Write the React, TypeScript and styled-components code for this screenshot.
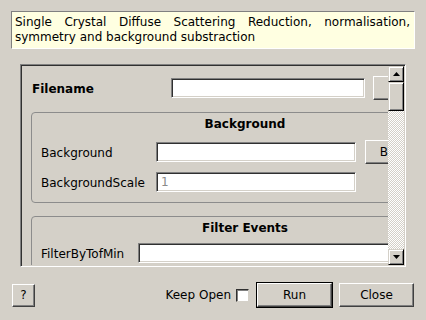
import React from "react";
import styled, { createGlobalStyle } from "styled-components";

const Global = createGlobalStyle`
  html, body { margin: 0; padding: 0; background: #d4d0c8; }
  body { font-family: "DejaVu Sans", "Liberation Sans", sans-serif; font-size: 12px; color: #000; }
`;

const Dialog = styled.div`
  width: 426px;
  height: 320px;
  box-sizing: border-box;
  padding: 11px 11px 0 11px;
  display: flex;
  flex-direction: column;
  background: #d4d0c8;
  overflow: hidden;
`;

const Description = styled.div`
  height: 38px;
  box-sizing: border-box;
  background: #ffffe1;
  border: 1px solid;
  border-color: #808080 #ffffff #ffffff #808080;
  padding: 3px 4px 3px 3px;
  line-height: 15px;
  text-align: justify;
`;

const ScrollFrame = styled.div`
  margin: 15px 9px 0 9px;
  height: 203px;
  box-sizing: border-box;
  border: 1px solid;
  border-color: #808080 #ffffff #ffffff #808080;
  box-shadow: inset 1px 1px 0 #303030, inset -1px -1px 0 #d4d0c8;
  padding: 1px;
  display: flex;
`;

const Viewport = styled.div`
  flex: 1;
  overflow: hidden;
`;

const Content = styled.div`
  width: 446px;
  box-sizing: border-box;
  padding: 10px 0 0 9px;
  display: flex;
  flex-direction: column;
`;

const FileRow = styled.div`
  display: flex;
  align-items: center;
  height: 24px;
  gap: 8px;
`;

const BoldLabel = styled.div<{ $w: number }>`
  width: ${(p) => p.$w}px;
  flex-shrink: 0;
  padding: 1px 0 0 1px;
  box-sizing: border-box;
  font-weight: bold;
`;

const Label = styled.div<{ $w: number }>`
  width: ${(p) => p.$w}px;
  flex-shrink: 0;
  padding-top: 1px;
  white-space: nowrap;
`;

const Field = styled.input<{ $w: number; $muted?: boolean }>`
  width: ${(p) => p.$w}px;
  height: 20px;
  flex-shrink: 0;
  box-sizing: border-box;
  margin: 0;
  padding: 0 4px;
  background: #ffffff;
  border: 1px solid;
  border-color: #808080 #ffffff #ffffff #808080;
  box-shadow: inset 1px 1px 0 #303030, inset -1px -1px 0 #d4d0c8;
  font-family: "DejaVu Sans", sans-serif;
  font-size: 12px;
  color: ${(p) => (p.$muted ? "#8a8a8a" : "#000")};
  outline: none;
`;

const Button = styled.button<{ $w: number; $h?: number }>`
  width: ${(p) => p.$w}px;
  height: ${(p) => p.$h ?? 24}px;
  flex-shrink: 0;
  box-sizing: border-box;
  margin: 0;
  padding: 0;
  background: #d4d0c8;
  border: 1px solid;
  border-color: #ffffff #404040 #404040 #ffffff;
  box-shadow: inset -1px -1px 0 #808080;
  font-family: "DejaVu Sans", sans-serif;
  font-size: 12px;
  color: #000;
  display: flex;
  align-items: center;
  justify-content: center;
`;

const DefaultButtonRing = styled.div`
  border: 1px solid #000;
  display: flex;
  flex-shrink: 0;
`;

const Group = styled.div<{ $mt: number }>`
  width: 428px;
  margin-top: ${(p) => p.$mt}px;
  box-sizing: border-box;
  border: 1px solid #8c8c8c;
  border-radius: 4px;
  padding: 4px 9px 10px 9px;
  display: flex;
  flex-direction: column;
  gap: 10px;
`;

const GroupTitle = styled.div<{ $after: number }>`
  height: 14px;
  line-height: 14px;
  margin-bottom: ${(p) => p.$after - 10}px;
  text-align: center;
  font-weight: bold;
`;

const Row = styled.div`
  display: flex;
  align-items: center;
  height: 20px;
  gap: 9px;
`;

const Scrollbar = styled.div`
  width: 16px;
  flex-shrink: 0;
  display: flex;
  flex-direction: column;
`;

const ArrowBtn = styled.div`
  height: 16px;
  box-sizing: border-box;
  background: #d4d0c8;
  border: 1px solid;
  border-color: #d4d0c8 #000 #000 #d4d0c8;
  box-shadow: inset 1px 1px 0 #fff, inset -1px -1px 0 #808080;
  display: flex;
  align-items: center;
  justify-content: center;
`;

const Thumb = styled.div`
  height: 29px;
  box-sizing: border-box;
  background: #d4d0c8;
  border: 1px solid;
  border-color: #d4d0c8 #000 #000 #d4d0c8;
  box-shadow: inset 1px 1px 0 #fff, inset -1px -1px 0 #808080;
`;

const Track = styled.div`
  flex: 1;
  background: repeating-conic-gradient(#ffffff 0 25%, #d4d0c8 0 50%) 0 0 / 2px 2px;
`;

const BottomBar = styled.div`
  margin: 15px 1px 0 1px;
  height: 26px;
  display: flex;
  align-items: center;
`;

const Spacer = styled.div`
  flex: 1;
`;

const KeepOpen = styled.label`
  display: flex;
  align-items: center;
  gap: 5px;
  margin-right: 7px;
`;

const Check = styled.span`
  width: 13px;
  height: 13px;
  box-sizing: border-box;
  background: #fff;
  border: 1px solid;
  border-color: #303030 #d4d0c8 #d4d0c8 #303030;
  box-shadow: inset 1px 1px 0 #808080;
`;

const Actions = styled.div`
  display: flex;
  align-items: center;
  gap: 6px;
`;

const Arrow = ({ up }: { up?: boolean }) => (
  <svg width="7" height="4" viewBox="0 0 7 4">
    <polygon points={up ? "0,4 7,4 3.5,0" : "0,0 7,0 3.5,4"} fill="#000" />
  </svg>
);

export default function App() {
  return (
    <>
      <Global />
      <Dialog>
        <Description>
          Single Crystal Diffuse Scattering Reduction, normalisation, symmetry and background substraction
        </Description>
        <ScrollFrame>
          <Viewport>
            <Content>
              <FileRow>
                <BoldLabel $w={132}>Filename</BoldLabel>
                <Field $w={194} readOnly value="" />
                <Button $w={80}>Browse</Button>
              </FileRow>
              <Group $mt={12}>
                <GroupTitle $after={11}>Background</GroupTitle>
                <Row>
                  <Label $w={106}>Background</Label>
                  <Field $w={200} readOnly value="" />
                  <Button $w={73}>Browse</Button>
                </Row>
                <Row>
                  <Label $w={106}>BackgroundScale</Label>
                  <Field $w={200} readOnly value="1" $muted />
                </Row>
              </Group>
              <Group $mt={13}>
                <GroupTitle $after={8}>Filter Events</GroupTitle>
                <Row>
                  <Label $w={88}>FilterByTofMin</Label>
                  <Field $w={300} readOnly value="" />
                </Row>
              </Group>
            </Content>
          </Viewport>
          <Scrollbar>
            <ArrowBtn>
              <Arrow up />
            </ArrowBtn>
            <Thumb />
            <Track />
            <ArrowBtn>
              <Arrow />
            </ArrowBtn>
          </Scrollbar>
        </ScrollFrame>
        <BottomBar>
          <Button $w={23} $h={23}>?</Button>
          <Spacer />
          <KeepOpen>
            Keep Open
            <Check />
          </KeepOpen>
          <Actions>
            <DefaultButtonRing>
              <Button $w={75}>Run</Button>
            </DefaultButtonRing>
            <Button $w={75}>Close</Button>
          </Actions>
        </BottomBar>
      </Dialog>
    </>
  );
}
